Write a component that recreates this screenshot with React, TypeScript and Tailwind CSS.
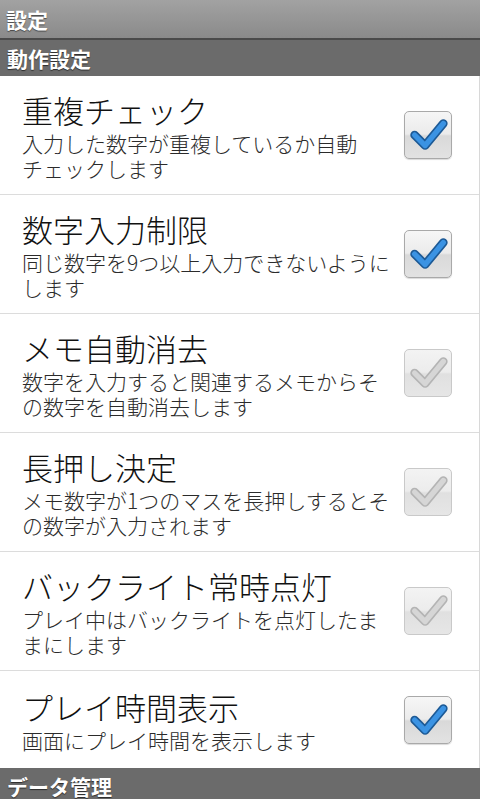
import React from 'react';

const jp = "font-['Noto_Sans_CJK_JP','Noto_Sans',sans-serif]";

type Item = {
  title: string;
  desc: string;
  enabled: boolean;
};

// \u2060 keeps "チェック" together at the line end
const items: Item[] = [
  { title: '重複チェック', desc: '入力した数字が重複しているか自動チ\u2060ェ\u2060ッ\u2060クします', enabled: true },
  { title: '数字入力制限', desc: '同じ数字を9つ以上入力できないようにします', enabled: true },
  { title: 'メモ自動消去', desc: '数字を入力すると関連するメモからその数字を自動消去します', enabled: false },
  { title: '長押し決定', desc: 'メモ数字が1つのマスを長押しするとその数字が入力されます', enabled: false },
  { title: 'バックライト常時点灯', desc: 'プレイ中はバックライトを点灯したままにします', enabled: false },
  { title: 'プレイ時間表示', desc: '画面にプレイ時間を表示します', enabled: true },
];

const CheckBox: React.FC<{ enabled: boolean }> = ({ enabled }) => {
  const d = 'M10 24 L21 35 L40 12';
  return (
    <div
      className={
        enabled
          ? 'relative w-[48px] h-[48px] shrink-0 rounded-[5px] border border-[#a9a9a9] bg-[linear-gradient(to_bottom,#f6f6f6_0%,#ebebeb_48%,#d9d9d9_52%,#e2e2e2_100%)] shadow-[0_1px_1px_rgba(0,0,0,0.15)]'
          : 'relative w-[48px] h-[48px] shrink-0 rounded-[5px] border border-[#c9c9c9] bg-[linear-gradient(to_bottom,#f3f3f3_0%,#ececec_48%,#e0e0e0_52%,#e6e6e6_100%)]'
      }
    >
      <svg viewBox="0 0 48 48" className="absolute inset-0 w-full h-full">
        <path
          d={d}
          fill="none"
          stroke={enabled ? '#1d5a96' : '#b4b4b4'}
          strokeWidth="9"
          strokeLinecap="round"
          strokeLinejoin="round"
        />
        <path
          d={d}
          fill="none"
          stroke={enabled ? '#3b93e3' : '#d6d6d6'}
          strokeWidth="5.5"
          strokeLinecap="round"
          strokeLinejoin="round"
        />
      </svg>
    </div>
  );
};

const SectionHeader: React.FC<{ label: string }> = ({ label }) => (
  <div className="h-[36px] bg-[#6b6b6b] flex items-center pl-[7px]">
    <span className="text-white font-bold text-[21px] leading-none [text-shadow:0_1px_1px_rgba(0,0,0,0.6)]">
      {label}
    </span>
  </div>
);

export default function App() {
  return (
    <div lang="ja" className={`w-[480px] h-[799px] overflow-hidden bg-white ${jp}`}>
      {/* Title bar */}
      <div className="h-[38px] bg-[linear-gradient(to_bottom,#a2a2a2,#8a8a8a)] flex items-center pl-[6px]">
        <span className="text-white font-bold text-[21px] leading-none [text-shadow:0_1px_1px_rgba(0,0,0,0.5)]">
          設定
        </span>
      </div>
      <div className="h-[2px] bg-[#4a4a4a]" />

      <SectionHeader label="動作設定" />

      <div className="border-r border-[#d8d8d8]">
        {items.map((item, i) => (
          <div
            key={item.title}
            className={
              i === items.length - 1
                ? 'flex items-center h-[97px] pl-[22px] pr-[27px] gap-[12px]'
                : 'flex items-center h-[119px] pl-[22px] pr-[27px] gap-[12px] border-b border-[#dcdcdc]'
            }
          >
            <div className="flex-1 min-w-0 font-light">
              <div className="text-[31px] leading-[42px] text-[#111]">{item.title}</div>
              <div className="text-[21px] leading-[25px] text-[#2b2b2b]">{item.desc}</div>
            </div>
            <CheckBox enabled={item.enabled} />
          </div>
        ))}
      </div>

      <SectionHeader label="データ管理" />
    </div>
  );
}
